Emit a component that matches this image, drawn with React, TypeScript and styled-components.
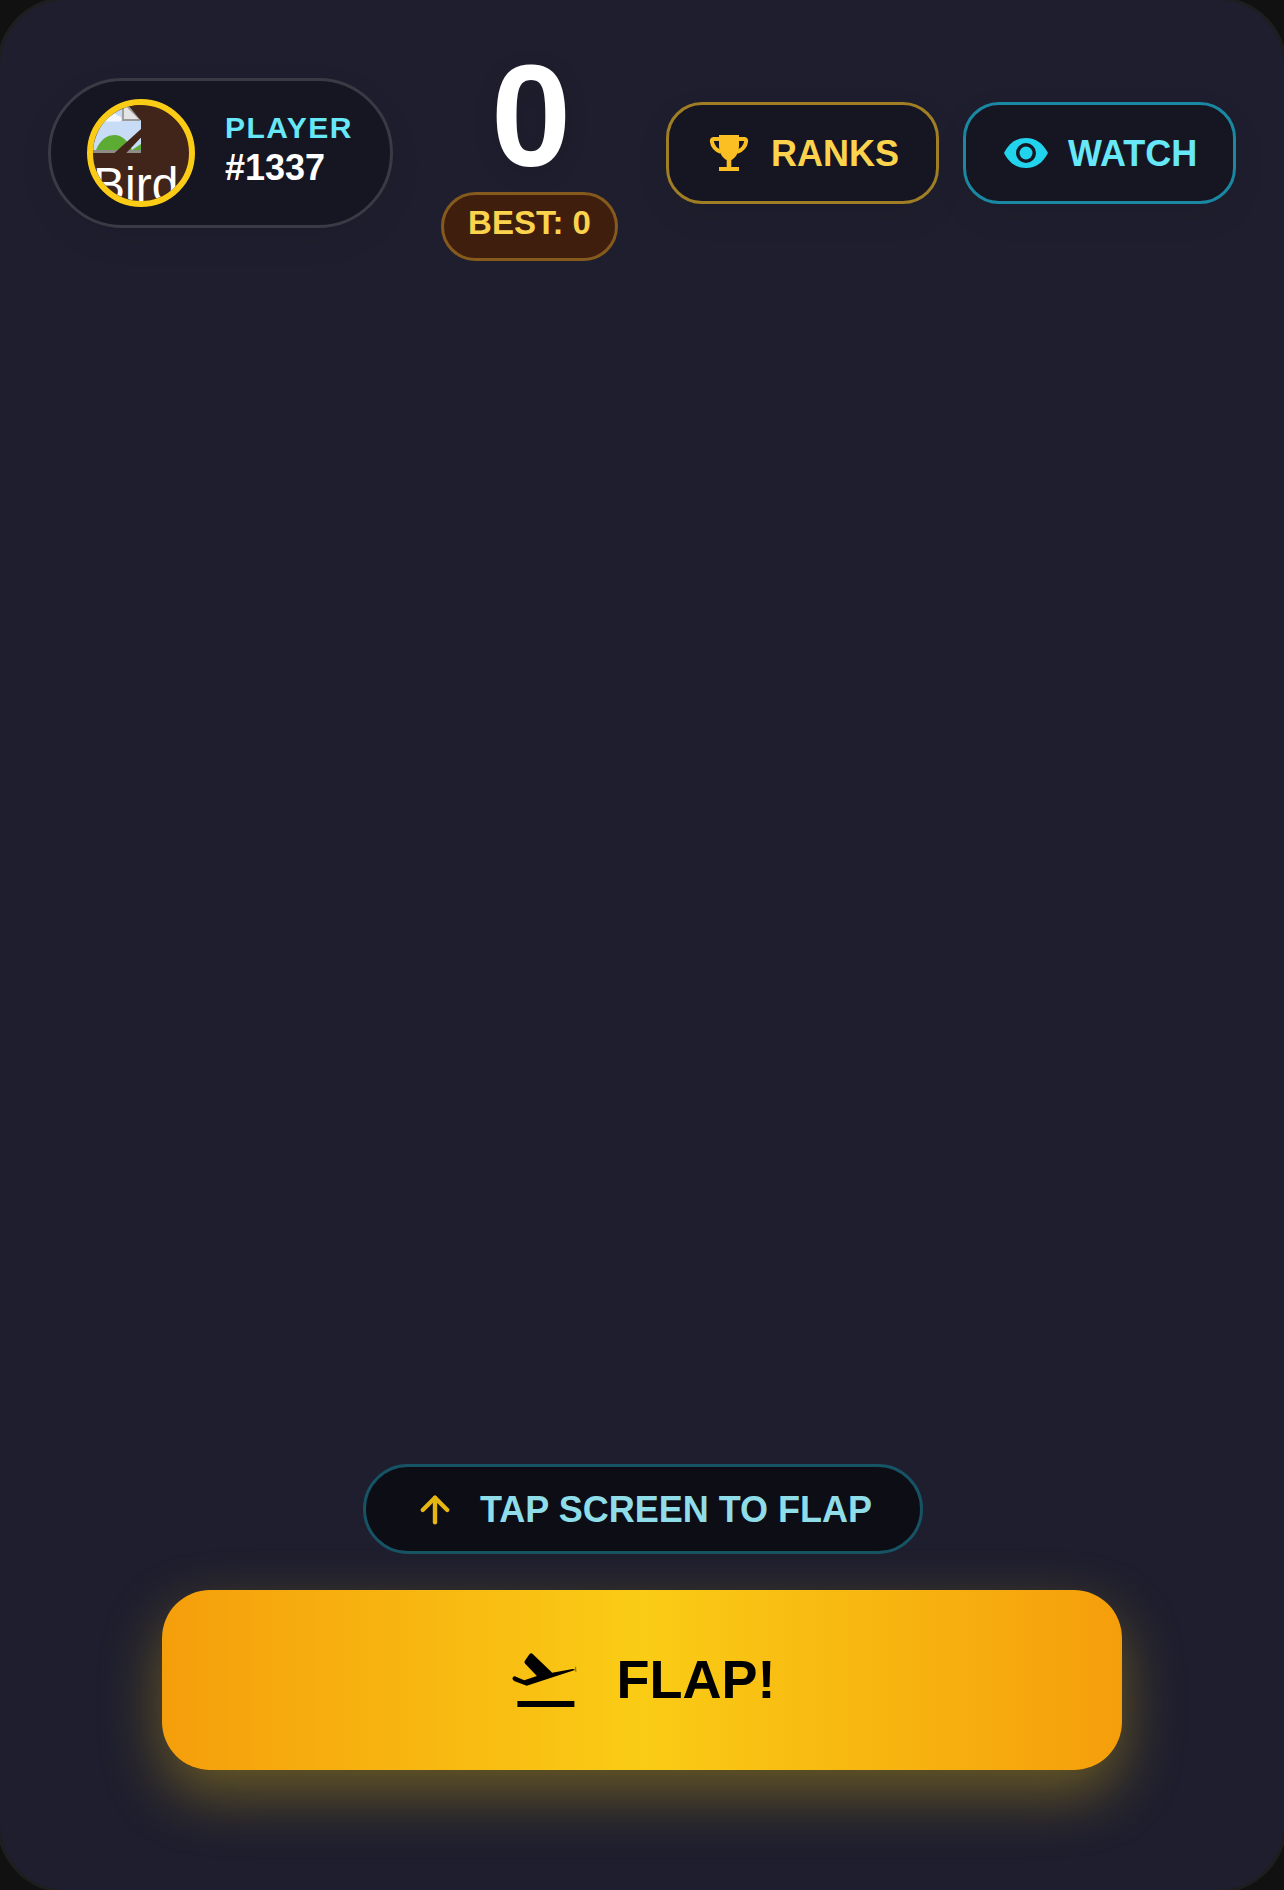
import styled, { createGlobalStyle } from 'styled-components';
import { ArrowUp } from 'lucide-react';

const GlobalStyle = createGlobalStyle`
  html, body {
    margin: 0;
    padding: 0;
    background: #111111;
  }
  * {
    box-sizing: border-box;
  }
`;

const Screen = styled.div`
  width: 1284px;
  height: 1890px;
  display: flex;
  flex-direction: column;
  align-items: center;
  padding: 45px 48px 120px;
  background: #1e1e2e;
  border-radius: 66px;
  box-shadow: 0 0 0 3px #1e1e1e;
  font-family: 'Liberation Sans', Arial, sans-serif;
  overflow: hidden;
`;

const Header = styled.header`
  width: 100%;
  display: flex;
  align-items: center;
  justify-content: space-between;
`;

const PlayerPill = styled.div`
  display: flex;
  align-items: center;
  gap: 30px;
  width: 345px;
  height: 150px;
  padding: 0 36px;
  background: #161622;
  border: 3px solid #3a3a45;
  border-radius: 75px;
  box-shadow: 0 12px 36px rgba(0, 0, 0, 0.06);
`;

const Avatar = styled.div`
  width: 108px;
  height: 108px;
  flex: none;
  overflow: hidden;
  background: #42251a;
  border: 6px solid #facc15;
  border-radius: 50%;
`;

const BrokenIcon = styled.svg`
  display: block;
  width: 48px;
  height: 48px;
  filter: blur(0.6px);
`;

const AltText = styled.div`
  margin-top: 4px;
  color: #ffffff;
  font-size: 48px;
  line-height: 55px;
`;

const PlayerText = styled.div`
  display: flex;
  flex-direction: column;
  padding-bottom: 9px;
`;

const PlayerLabel = styled.span`
  color: #67e8f9;
  font-size: 30px;
  line-height: 38px;
  font-weight: 700;
  letter-spacing: 1.5px;
`;

const PlayerId = styled.span`
  color: #ffffff;
  font-size: 36px;
  line-height: 42px;
  font-weight: 700;
`;

const ScoreColumn = styled.div`
  display: flex;
  flex-direction: column;
  align-items: center;
  gap: 3px;
`;

const Score = styled.div`
  padding-left: 3px;
  color: #ffffff;
  font-size: 144px;
  line-height: 144px;
  font-weight: 700;
  text-shadow: 0 6px 24px rgba(0, 0, 0, 0.12);
`;

const BestPill = styled.div`
  width: 177px;
  height: 69px;
  padding-top: 9px;
  text-align: center;
  color: #fcd34d;
  font-size: 33px;
  line-height: 38px;
  font-weight: 700;
  background: #3f1e0e;
  border: 3px solid #865a1c;
  border-radius: 35px;
`;

const NavGroup = styled.nav`
  display: flex;
  gap: 24px;
`;

const NavButton = styled.button<{ $tone: 'gold' | 'cyan' }>`
  display: flex;
  align-items: center;
  gap: 18px;
  width: 273px;
  height: 102px;
  padding: 2px 36px 0;
  font-family: inherit;
  font-size: 36px;
  font-weight: 700;
  color: ${(p) => (p.$tone === 'gold' ? '#fcd34d' : '#67e8f9')};
  background: #161622;
  border: 3px solid ${(p) => (p.$tone === 'gold' ? '#a07e24' : '#1a88a2')};
  border-radius: 36px;
  box-shadow: 0 12px 36px rgba(0, 0, 0, 0.06);
`;

const NavIcon = styled.svg`
  width: 48px;
  height: 48px;
  flex: none;
  margin-top: -2px;
`;

const Spacer = styled.div`
  flex: 1;
`;

const Hint = styled.div`
  display: flex;
  align-items: center;
  justify-content: center;
  gap: 24px;
  width: 560px;
  height: 90px;
  margin: 0 0 36px 2px;
  padding-top: 1px;
  color: #8fdde9;
  font-size: 36px;
  font-weight: 700;
  white-space: nowrap;
  background: #0d0e15;
  border: 3px solid #165465;
  border-radius: 45px;

  svg {
    flex: none;
    color: #e6b611;
  }
`;

const FlapButton = styled.button`
  display: flex;
  align-items: center;
  justify-content: center;
  gap: 36px;
  width: 960px;
  height: 180px;
  flex: none;
  padding: 0 0 2px;
  color: #000000;
  font-family: inherit;
  font-size: 54px;
  font-weight: 700;
  background: linear-gradient(90deg, #f59e0b, #facc15, #f59e0b);
  border: 0;
  border-radius: 48px;
  box-shadow: 0 24px 60px rgba(250, 204, 21, 0.35);
`;

const FlapIcon = styled.svg`
  width: 72px;
  height: 72px;
  flex: none;
  margin-top: 2px;
`;

// chrome's broken image glyph, as the avatar image failed to load
const BrokenImage = () => (
  <BrokenIcon viewBox="0 0 16 16">
    <rect width="16" height="16" fill="#c9dcf6" />
    <path d="M0 5 C1 3.5 3 4 3.5 3 C4.5 1.5 7 2 8 3.5 C9.5 3.5 10 5 9 5.5 H0 Z" fill="#f4f8fe" />
    <path d="M1 15 C2.5 11.5 4.5 10 7.5 10 C10 10.2 12 12.5 13 15 Z" fill="#5cab32" />
    <path d="M13 15 L16 13 V15 Z" fill="#5cab32" />
    <rect y="15" width="16" height="1" fill="#8f8c88" />
    <path d="M10 0 H11 L15.5 4.5 V5 H10 Z" fill="#e4e4e4" stroke="#9a9a9a" strokeWidth="0.6" />
    <path d="M10.8 -1 H17 V5 H15.8 Z" fill="#42251a" />
    <path d="M16 8 V10.8 L10.6 16.5 H6.6 Z" fill="#42251a" />
  </BrokenIcon>
);

const TrophyIcon = () => (
  <NavIcon viewBox="0 0 48 48">
    <path d="M14 6 H34 V17 C34 25 29 30 26.3 31 V38 H34 V42 H14 V38 H21.7 V31 C19 30 14 25 14 17 Z" fill="#fbbf24" />
    <path
      d="M15 10 H8.5 C7.2 10 6.7 11 6.9 12.5 C7.5 17 11 21 16 23 M33 10 H39.5 C40.8 10 41.3 11 41.1 12.5 C40.5 17 37 21 32 23"
      fill="none"
      stroke="#fbbf24"
      strokeWidth="4"
    />
  </NavIcon>
);

const EyeIcon = () => (
  <NavIcon viewBox="0 0 48 48">
    <path d="M2 24 C7 14.5 14 9 24 9 C34 9 41 14.5 46 24 C41 33.5 34 39 24 39 C14 39 7 33.5 2 24 Z" fill="#22d3ee" />
    <circle cx="24" cy="24" r="10" fill="#161622" />
    <circle cx="24" cy="24" r="6.5" fill="#22d3ee" />
  </NavIcon>
);

const TakeoffIcon = () => (
  <FlapIcon viewBox="0 0 24 24">
    <rect x="2.8" y="19" width="19" height="2" fill="#000000" />
    <path
      d="M5.3 5.6 L6.8 3.4 C7.1 3 7.6 3 7.9 3.3 L14.4 9.6 L21.2 8.3 L22.2 8.6 L5.9 13.9 L1.9 12.4 C1.2 12.1 1 11.5 1.3 11.1 C1.6 10.7 2.1 10.7 2.5 11 L5.1 12.1 L9.3 10.7 L5.4 6.6 C5.1 6.3 5.1 5.9 5.3 5.6 Z"
      fill="#000000"
    />
    <path d="M22.2 7.6 L22.3 9.3" stroke="#000000" strokeWidth="0.15" fill="none" />
  </FlapIcon>
);

const App = () => {
  return (
    <>
      <GlobalStyle />
      <Screen>
        <Header>
          <PlayerPill>
            <Avatar>
              <BrokenImage />
              <AltText>Bird</AltText>
            </Avatar>
            <PlayerText>
              <PlayerLabel>PLAYER</PlayerLabel>
              <PlayerId>#1337</PlayerId>
            </PlayerText>
          </PlayerPill>

          <ScoreColumn>
            <Score>0</Score>
            <BestPill>BEST: 0</BestPill>
          </ScoreColumn>

          <NavGroup>
            <NavButton $tone="gold">
              <TrophyIcon />
              RANKS
            </NavButton>
            <NavButton $tone="cyan">
              <EyeIcon />
              WATCH
            </NavButton>
          </NavGroup>
        </Header>

        <Spacer />

        <Hint>
          <ArrowUp size={42} strokeWidth={2.5} />
          TAP SCREEN TO FLAP
        </Hint>
        <FlapButton>
          <TakeoffIcon />
          FLAP!
        </FlapButton>
      </Screen>
    </>
  );
};

export default App;
